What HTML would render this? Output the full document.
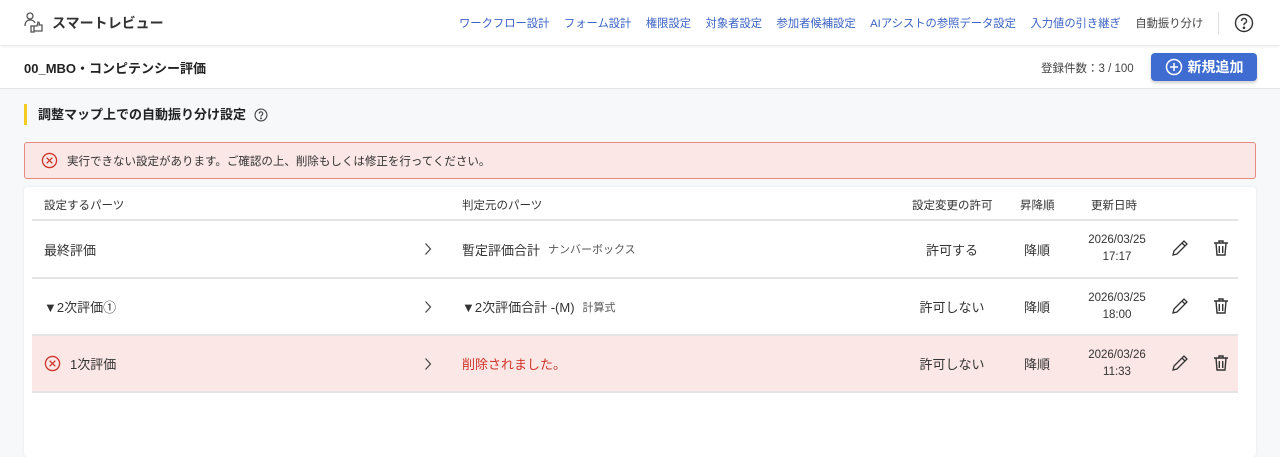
<!DOCTYPE html><html><head><meta charset="utf-8"><style>
*{box-sizing:border-box;margin:0;padding:0}
body{width:1280px;height:446px;overflow:hidden;background:#f7f8fa;font-family:"Liberation Sans","Noto Sans CJK JP",sans-serif;color:#222;position:relative}
.hdr{position:absolute;left:0;top:0;width:1280px;height:45px;background:#fff;box-shadow:0 1px 3px rgba(0,0,0,.12);z-index:2}
.logo{position:absolute;left:24px;top:12px;display:flex;align-items:center;gap:6px;font-size:14px;font-weight:bold;color:#333}
.nav{position:absolute;left:459px;top:15px;font-size:11.3px;color:#3b63c4;display:flex;gap:14.5px;white-space:nowrap}
.nav span:last-child{color:#444}
.sep{position:absolute;left:1218px;top:12px;width:1px;height:22px;background:#ddd}
.sub{position:absolute;left:0;top:45px;width:1280px;height:44px;background:#fff;border-bottom:1px solid #e5e5e5}
.title{position:absolute;left:24px;top:13px;font-size:13px;font-weight:bold}
.cnt{position:absolute;left:1041px;top:15px;font-size:11.5px;color:#444}
.btn{position:absolute;left:1151px;top:8px;width:106px;height:28px;background:#3e6cd0;border-radius:4px;color:#fff;font-weight:bold;font-size:14px;display:flex;align-items:center;justify-content:center;gap:5px;box-shadow:0 2px 3px rgba(0,0,0,.2)}
.sec{position:absolute;left:24px;top:104px;border-left:3px solid #f5cc1f;height:21px;padding-left:11px;font-size:13px;font-weight:bold;line-height:21px;display:flex;align-items:center;gap:8px}
.alert{position:absolute;left:24px;top:142px;width:1232px;height:37px;background:#fbe7e5;border:1px solid #e6897f;border-radius:3px;font-size:11.5px;color:#333;display:flex;align-items:center;padding-left:16px;gap:9px}
.card{position:absolute;left:24px;top:187px;width:1232px;height:270px;background:#fff;border-radius:4px;box-shadow:0 0 3px rgba(0,0,0,.08)}
.row{position:absolute;left:8px;width:1206px;border-bottom:2px solid #e4e4e4}
.c{position:absolute;top:0;height:100%;display:flex;align-items:center}
.h{font-size:11.5px;color:#333}
.r{font-size:13px;color:#333}
.small{font-size:11px;color:#555;margin-left:8px}
.ctr{justify-content:center;text-align:center}
.dt{font-size:11.5px;line-height:17px}
</style></head><body>
<div class="hdr">
<div class="logo"><svg width="22" height="22" viewBox="0 0 22 22" fill="none" stroke="#555" stroke-width="1.3"><circle cx="6" cy="4" r="3"/><path d="M1 14c0-4 2-6 5-6s4 1 5 3"/><rect x="7" y="14" width="3" height="6"/><path d="M10 14h3l1-4c1 0 2 1 1 3h3v6h-8"/></svg>スマートレビュー</div>
<div class="nav"><span>ワークフロー設計</span><span>フォーム設計</span><span>権限設定</span><span>対象者設定</span><span>参加者候補設定</span><span>AIアシストの参照データ設定</span><span>入力値の引き継ぎ</span><span>自動振り分け</span></div>
<div class="sep"></div>
<svg style="position:absolute;left:1234px;top:13px" width="20" height="20" viewBox="0 0 20 20" fill="none" stroke="#333" stroke-width="1.4"><circle cx="10" cy="10" r="8.5"/><path d="M7.5 8a2.5 2.5 0 1 1 3.3 2.3c-.6.3-.8.7-.8 1.4v.6"/><circle cx="10" cy="14.8" r=".6" fill="#333"/></svg>
</div>
<div class="sub"><div class="title">00_MBO・コンピテンシー評価</div><div class="cnt">登録件数：3 / 100</div>
<div class="btn"><svg width="18" height="18" viewBox="0 0 18 18" fill="none" stroke="#fff" stroke-width="1.5"><circle cx="9" cy="9" r="7.5"/><path d="M9 5v8M5 9h8"/></svg>新規追加</div></div>
<div class="sec">調整マップ上での自動振り分け設定<svg width="14" height="14" viewBox="0 0 20 20" fill="none" stroke="#444" stroke-width="1.6"><circle cx="10" cy="10" r="8.5"/><path d="M7.5 8a2.5 2.5 0 1 1 3.3 2.3c-.6.3-.8.7-.8 1.4v.6"/><circle cx="10" cy="14.8" r=".6" fill="#444"/></svg></div>
<div class="alert"><svg width="17" height="17" viewBox="0 0 18 18" fill="none" stroke="#d0352b" stroke-width="1.4"><circle cx="9" cy="9" r="7.5"/><path d="M6 6l6 6M12 6l-6 6"/></svg>実行できない設定があります。ご確認の上、削除もしくは修正を行ってください。</div>
<div class="card">
<div class="row h" style="top:3px;height:31px"><div class="c" style="left:12px">設定するパーツ</div><div class="c" style="left:430px">判定元のパーツ</div><div class="c" style="left:880px">設定変更の許可</div><div class="c" style="left:988px">昇降順</div><div class="c" style="left:1059px">更新日時</div></div>
<div class="row r" style="top:34px;height:58px"><div class="c" style="left:12px">最終評価</div><div class="c" style="left:392px"><svg width="8" height="14"><path d="M1.5 1.5l5 5.5-5 5.5" fill="none" stroke="#444" stroke-width="1.2"/></svg></div><div class="c" style="left:430px">暫定評価合計<span class="small">ナンバーボックス</span></div><div class="c ctr" style="left:860px;width:120px">許可する</div><div class="c" style="left:992px">降順</div><div class="c ctr dt" style="left:1040px;width:90px">2026/03/25<br>17:17</div></div>
<div class="row r" style="top:92px;height:57px"><div class="c" style="left:12px">▼2次評価①</div><div class="c" style="left:392px"><svg width="8" height="14"><path d="M1.5 1.5l5 5.5-5 5.5" fill="none" stroke="#444" stroke-width="1.2"/></svg></div><div class="c" style="left:430px">▼2次評価合計 -(M)<span class="small">計算式</span></div><div class="c ctr" style="left:860px;width:120px">許可しない</div><div class="c" style="left:992px">降順</div><div class="c ctr dt" style="left:1040px;width:90px">2026/03/25<br>18:00</div></div>
<div class="row r" style="top:149px;height:57px;background:#fbe7e5"><div class="c" style="left:12px;gap:9px"><svg width="17" height="17" viewBox="0 0 18 18" fill="none" stroke="#d0352b" stroke-width="1.4"><circle cx="9" cy="9" r="7.5"/><path d="M6 6l6 6M12 6l-6 6"/></svg>1次評価</div><div class="c" style="left:392px"><svg width="8" height="14"><path d="M1.5 1.5l5 5.5-5 5.5" fill="none" stroke="#444" stroke-width="1.2"/></svg></div><div class="c" style="left:430px;color:#d0352b">削除されました。</div><div class="c ctr" style="left:860px;width:120px">許可しない</div><div class="c" style="left:992px">降順</div><div class="c ctr dt" style="left:1040px;width:90px">2026/03/26<br>11:33</div></div>
</div>
<svg width="0" height="0" style="position:absolute"><defs>
<g id="pen" fill="none" stroke="#333" stroke-width="1.3"><path d="M3 17l1-4L14 3l3 3L7 16z M12 5l3 3"/></g>
<g id="bin" fill="none" stroke="#333" stroke-width="1.4"><path d="M3 5h14M8 5V3h4v2M5 5l1 12h8l1-12M8.3 8v7M11.7 8v7"/></g></defs></svg>
<svg style="position:absolute;left:1170px;top:238px" width="20" height="20"><use href="#pen"/></svg>
<svg style="position:absolute;left:1211px;top:238px" width="20" height="20"><use href="#bin"/></svg>
<svg style="position:absolute;left:1170px;top:296px" width="20" height="20"><use href="#pen"/></svg>
<svg style="position:absolute;left:1211px;top:296px" width="20" height="20"><use href="#bin"/></svg>
<svg style="position:absolute;left:1170px;top:353px" width="20" height="20"><use href="#pen"/></svg>
<svg style="position:absolute;left:1211px;top:353px" width="20" height="20"><use href="#bin"/></svg>
</body></html>
